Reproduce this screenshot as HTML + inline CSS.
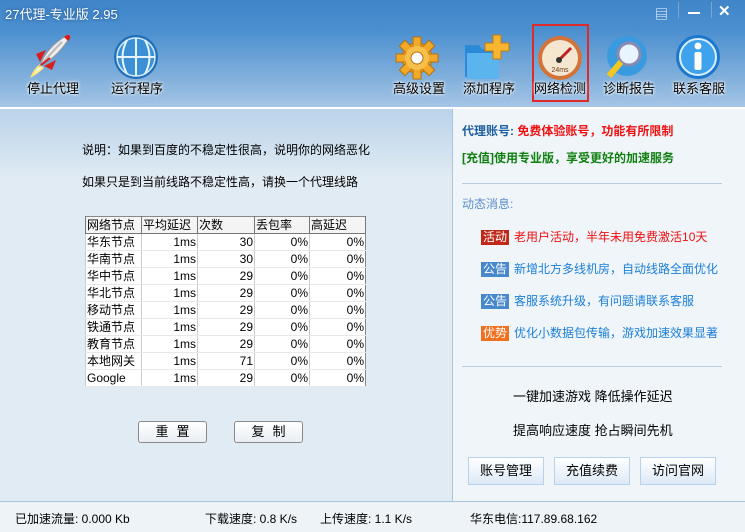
<!DOCTYPE html>
<html><head><meta charset="utf-8"><style>
*{margin:0;padding:0;box-sizing:border-box}
body{width:745px;height:532px;overflow:hidden;position:relative;font-family:"Liberation Sans","Noto Sans CJK SC","WenQuanYi Zen Hei",sans-serif;font-size:12px;background:#e1ebf3}
.hdr{position:absolute;left:0;top:0;width:745px;height:108px;background:linear-gradient(#3f85c8 0,#4b8fcf 30px,#7eaedb 75px,#a6c6e6 108px)}
.title{position:absolute;left:5px;top:4px;color:#fff;font-size:13px;text-shadow:0 0 3px #1a4a80}
.tb{position:absolute;top:78px;font-size:13px;color:#000;text-shadow:0 0 3px #fff,0 0 3px #fff;white-space:nowrap}
.ic{position:absolute}
.line{position:absolute;left:0;top:107px;width:745px;height:2px;background:#fff}
.left{position:absolute;left:0;top:109px;width:452px;height:392px;background:linear-gradient(#b9d3ea,#e1ebf3 70px)}
.right{position:absolute;left:452px;top:109px;width:293px;height:392px;background:#f0f5fa;border-left:1px solid #a9c4dc}
.t{position:absolute;white-space:nowrap}
table{position:absolute;left:85px;top:216px;border-collapse:collapse;background:#fff;border:1px solid #888;font-size:12px}
tr{height:17px}
td{height:17px;padding:0 1px;border-left:1px solid #ccc;line-height:16px}
th{font-weight:normal;text-align:left;height:17px;border:1px solid #777;border-top:none;background:#f4f4f4;padding:0 1px;line-height:15px}
td.n{text-align:right}
tr td{border-bottom:1px solid #e8e8e8}
.btn{position:absolute;width:69px;height:22px;border:1px solid #8a8a8a;border-radius:3px;background:linear-gradient(#fff,#e9eef3);text-align:center;line-height:20px;font-size:13px;letter-spacing:8px;padding-left:8px}
.tag{display:inline-block;color:#fff;padding:0 2px;height:15px;line-height:15px;margin-right:5px}
.rb{position:absolute;top:457px;width:76px;height:28px;border:1px solid #b5d3ee;background:linear-gradient(#fff,#dde9f6);text-align:center;line-height:26px;font-size:13px}
.status{position:absolute;left:0;top:501px;width:745px;height:31px;background:#eef3f8;border-top:1px solid #a9c4dc}
.r{font-size:13px}
</style></head><body>
<div class="hdr">
<div class="title">27代理-专业版 2.95</div>
<div class="t" style="left:655px;top:4px;color:#fff;font-size:13px">▤</div>
<div class="t" style="left:678px;top:2px;width:1px;height:16px;background:#7aa8d4"></div>
<div class="t" style="left:688px;top:12px;width:12px;height:2px;background:#fff"></div>
<div class="t" style="left:711px;top:2px;width:1px;height:16px;background:#7aa8d4"></div>
<div class="t" style="left:718px;top:2px;color:#fff;font-size:15px;font-weight:bold">✕</div>
<!-- rocket -->
<svg class="ic" style="left:26px;top:32px" width="48" height="48" viewBox="0 0 48 48">
<path d="M4 46 Q8 36 14 32 L18 36 Q12 42 4 46 Z" fill="#ffe27a"/>
<path d="M8 42 Q11 37 14 34 L16 36 Q13 39 8 42 Z" fill="#fff8d0"/>
<path d="M10 22 L20 18 L14 30 Z" fill="#d81e1e"/>
<path d="M26 38 L30 28 L18 34 Z" fill="#d81e1e"/>
<path d="M14 34 Q20 16 40 4 Q44 2 44 4 Q44 6 42 8 Q30 26 14 34 Z" fill="#eeeeee" stroke="#9a9a9a"/>
<path d="M38 5 Q43 1 44 4 Q45 6 42 9 Z" fill="#d81e1e"/>
<path d="M16 32 Q24 22 36 10" stroke="#bbb" stroke-width="2" fill="none"/>
<path d="M15 33 L24 26" stroke="#d81e1e" stroke-width="2"/>
</svg>
<!-- globe -->
<svg class="ic" style="left:113px;top:34px" width="46" height="46" viewBox="0 0 46 46"><circle cx="23" cy="23" r="22" fill="#1f6fb8"/><circle cx="23" cy="23" r="19" fill="#3b8fd4" stroke="#cfe8ff" stroke-width="1.5"/><path d="M4 23 H42 M23 4 V42 M14 6 Q5 23 14 40 M32 6 Q41 23 32 40" stroke="#e8f5ff" stroke-width="2" fill="none"/></svg>
<!-- gear -->
<svg class="ic" style="left:394px;top:35px" width="46" height="46" viewBox="0 0 46 46"><g fill="#f3a928" stroke="#b56f10"><circle cx="23" cy="23" r="15"/><rect x="19" y="2" width="8" height="42"/><rect x="2" y="19" width="42" height="8"/><rect x="19" y="2" width="8" height="42" transform="rotate(45 23 23)"/><rect x="19" y="2" width="8" height="42" transform="rotate(-45 23 23)"/></g><circle cx="23" cy="23" r="12" fill="#f7c04a"/><circle cx="23" cy="23" r="6" fill="#fff" stroke="#b56f10"/></svg>
<!-- folder -->
<svg class="ic" style="left:463px;top:33px" width="48" height="48" viewBox="0 0 48 48"><path d="M2 12 H16 L19 16 H34 V44 H2 Z" fill="#2a8ad8"/><path d="M4 20 H36 V46 H4 Z" fill="#5cb4ef"/><path d="M30 2 H38 V10 H46 V18 H38 V26 H30 V18 H22 V10 H30 Z" fill="#f7b530" stroke="#c07a10"/></svg>
<!-- gauge -->
<div class="t" style="left:532px;top:24px;width:57px;height:78px;border:2px solid #e02a2a"></div>
<svg class="ic" style="left:537px;top:35px" width="46" height="46" viewBox="0 0 46 46"><circle cx="23" cy="23" r="22" fill="#d2743a"/><circle cx="23" cy="23" r="18" fill="#f4e6cf"/><path d="M22 25 L34 13" stroke="#c02020" stroke-width="3"/><circle cx="22" cy="25" r="3" fill="#333"/><text x="23" y="37" font-size="7" text-anchor="middle" fill="#6b3a18" font-family="Liberation Sans">24ms</text></svg>
<!-- magnifier -->
<svg class="ic" style="left:603px;top:34px" width="46" height="46" viewBox="0 0 46 46"><circle cx="24" cy="22" r="20" fill="#3a9ae0"/><circle cx="26" cy="20" r="11" fill="#e8f4ff" stroke="#8a8ab0" stroke-width="3"/><path d="M18 28 L6 42" stroke="#f2c820" stroke-width="6"/></svg>
<!-- info -->
<svg class="ic" style="left:675px;top:34px" width="46" height="46" viewBox="0 0 46 46"><circle cx="23" cy="23" r="22" fill="#1c78cf"/><circle cx="23" cy="23" r="18" fill="#3fa2ec" stroke="#d8efff" stroke-width="2"/><circle cx="23" cy="12" r="3.5" fill="#fff"/><rect x="19.5" y="18" width="7" height="18" rx="2" fill="#fff"/></svg>
<div class="tb" style="left:27px">停止代理</div>
<div class="tb" style="left:111px">运行程序</div>
<div class="tb" style="left:393px">高级设置</div>
<div class="tb" style="left:463px">添加程序</div>
<div class="tb" style="left:534px">网络检测</div>
<div class="tb" style="left:603px">诊断报告</div>
<div class="tb" style="left:673px">联系客服</div>
</div>
<div class="line"></div>
<div class="left">
<div class="t" style="left:82px;top:32px">说明：如果到百度的不稳定性很高，说明你的网络恶化</div>
<div class="t" style="left:82px;top:64px">如果只是到当前线路不稳定性高，请换一个代理线路</div>
</div>
<table>
<tr><th style="width:56px">网络节点</th><th style="width:56px">平均延迟</th><th style="width:57px">次数</th><th style="width:55px">丢包率</th><th style="width:56px">高延迟</th></tr>
<tr><td>华东节点</td><td class="n">1ms</td><td class="n">30</td><td class="n">0%</td><td class="n">0%</td></tr>
<tr><td>华南节点</td><td class="n">1ms</td><td class="n">30</td><td class="n">0%</td><td class="n">0%</td></tr>
<tr><td>华中节点</td><td class="n">1ms</td><td class="n">29</td><td class="n">0%</td><td class="n">0%</td></tr>
<tr><td>华北节点</td><td class="n">1ms</td><td class="n">29</td><td class="n">0%</td><td class="n">0%</td></tr>
<tr><td>移动节点</td><td class="n">1ms</td><td class="n">29</td><td class="n">0%</td><td class="n">0%</td></tr>
<tr><td>铁通节点</td><td class="n">1ms</td><td class="n">29</td><td class="n">0%</td><td class="n">0%</td></tr>
<tr><td>教育节点</td><td class="n">1ms</td><td class="n">29</td><td class="n">0%</td><td class="n">0%</td></tr>
<tr><td>本地网关</td><td class="n">1ms</td><td class="n">71</td><td class="n">0%</td><td class="n">0%</td></tr>
<tr><td>Google</td><td class="n">1ms</td><td class="n">29</td><td class="n">0%</td><td class="n">0%</td></tr>
</table>
<div class="btn" style="left:138px;top:421px">重置</div>
<div class="btn" style="left:234px;top:421px">复制</div>
<div class="right">
<div class="t" style="left:9px;top:13px;font-weight:bold;color:#1c5e9e">代理账号: <span style="color:#f01010">免费体验账号，功能有所限制</span></div>
<div class="t" style="left:9px;top:40px;font-weight:bold;color:#108010">[充值]使用专业版，享受更好的加速服务</div>
<div class="t" style="left:9px;top:74px;width:260px;height:1px;background:#b8cde0"></div>
<div class="t" style="left:9px;top:86px;color:#5b8fc8">动态消息:</div>
<div class="t" style="left:28px;top:119px;color:#f01010"><span class="tag" style="background:#c0281a">活动</span>老用户活动，半年未用免费激活10天</div>
<div class="t" style="left:28px;top:151px;color:#1b7fd8"><span class="tag" style="background:#4a88cc">公告</span>新增北方多线机房，自动线路全面优化</div>
<div class="t" style="left:28px;top:183px;color:#1b7fd8"><span class="tag" style="background:#4a88cc">公告</span>客服系统升级，有问题请联系客服</div>
<div class="t" style="left:28px;top:215px;color:#1b7fd8"><span class="tag" style="background:#f07020">优势</span>优化小数据包传输，游戏加速效果显著</div>
<div class="t" style="left:9px;top:257px;width:260px;height:1px;background:#b8cde0"></div>
<div class="t" style="left:60px;top:277px;font-size:13px">一键加速游戏 降低操作延迟</div>
<div class="t" style="left:60px;top:311px;font-size:13px">提高响应速度 抢占瞬间先机</div>
</div>
<div class="rb" style="left:468px">账号管理</div>
<div class="rb" style="left:554px">充值续费</div>
<div class="rb" style="left:640px">访问官网</div>
<div class="status">
<div class="t" style="left:15px;top:8px">已加速流量: 0.000 Kb</div>
<div class="t" style="left:205px;top:8px">下载速度: 0.8 K/s</div>
<div class="t" style="left:320px;top:8px">上传速度: 1.1 K/s</div>
<div class="t" style="left:470px;top:8px">华东电信:117.89.68.162</div>
</div>
</body></html>
